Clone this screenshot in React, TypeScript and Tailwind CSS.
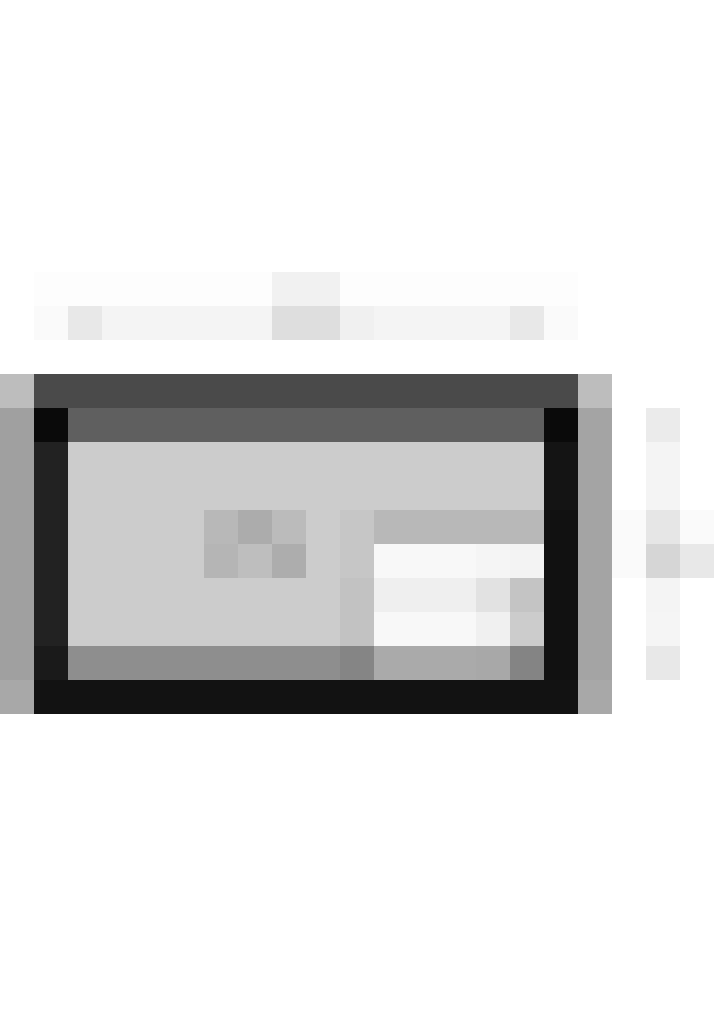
const palette: Record<string, string> = {
  ".": "bg-white",
  a: "bg-[#fdfdfd]",
  b: "bg-[#f1f1f1]",
  c: "bg-[#fafafa]",
  d: "bg-[#e8e8e8]",
  e: "bg-[#f4f4f4]",
  f: "bg-[#dedede]",
  g: "bg-[#bdbdbd]",
  h: "bg-[#4a4a4a]",
  i: "bg-[#a0a0a0]",
  j: "bg-[#0a0a0a]",
  k: "bg-[#5f5f5f]",
  l: "bg-[#a4a4a4]",
  m: "bg-[#ebebeb]",
  n: "bg-[#222222]",
  o: "bg-[#cccccc]",
  p: "bg-[#141414]",
  q: "bg-[#b8b8b8]",
  r: "bg-[#acacac]",
  s: "bg-[#bbbbbb]",
  t: "bg-[#c6c6c6]",
  u: "bg-[#111111]",
  v: "bg-[#e6e6e6]",
  w: "bg-[#b5b5b5]",
  x: "bg-[#bebebe]",
  y: "bg-[#adadad]",
  z: "bg-[#f8f8f8]",
  A: "bg-[#f5f5f5]",
  B: "bg-[#f3f3f3]",
  C: "bg-[#d6d6d6]",
  D: "bg-[#c2c2c2]",
  E: "bg-[#efefef]",
  F: "bg-[#e2e2e2]",
  G: "bg-[#c4c4c4]",
  H: "bg-[#f0f0f0]",
  I: "bg-[#1a1a1a]",
  J: "bg-[#8e8e8e]",
  K: "bg-[#858585]",
  L: "bg-[#aaaaaa]",
  M: "bg-[#a8a8a8]",
  N: "bg-[#848484]",
  O: "bg-[#121212]",
};

const blank = ".....................";

// one letter per 34px block, 21 blocks a row
const rows = [
  blank,
  blank,
  blank,
  blank,
  blank,
  blank,
  blank,
  blank,
  ".aaaaaaabbaaaaaaa....",
  ".cdeeeeeffHeeeedc....",
  blank,
  "ghhhhhhhhhhhhhhhhg...",
  "ijkkkkkkkkkkkkkkjl.m.",
  "inoooooooooooooopl.e.",
  "inoooooooooooooopl.e.",
  "inooooqrsotqqqqqulcvc",
  "inoooowxyotzzzABulcCd",
  "inooooooooDEEEFGul.e.",
  "inooooooooDzzzHoul.A.",
  "iIJJJJJJJJKLLLMNul.d.",
  "MOOOOOOOOOOOOOOOOM...",
  blank,
  blank,
  blank,
  blank,
  blank,
  blank,
  blank,
  blank,
  blank,
];

export default function App() {
  return (
    <main className="min-h-[1018px] w-[720px] overflow-hidden bg-white">
      <div className="grid grid-cols-[repeat(21,34px)] auto-rows-[34px]">
        {rows.map((row, r) =>
          row.split("").map((ch, c) => <div key={`${r}-${c}`} className={palette[ch] ?? "bg-white"} />)
        )}
      </div>
    </main>
  );
}
